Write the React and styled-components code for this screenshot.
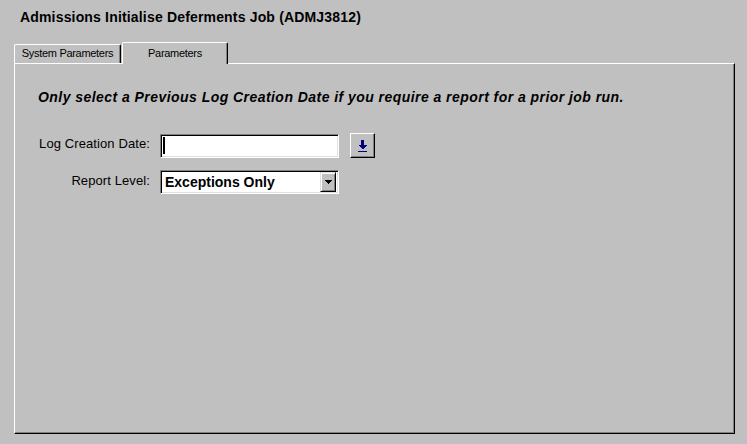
import React from "react";
import styled, { createGlobalStyle } from "styled-components";

const GlobalStyle = createGlobalStyle`
  html, body { margin: 0; padding: 0; background: #c0c0c0; }
  body { font-family: "Liberation Sans", Arial, sans-serif; color: #000; }
  * { box-sizing: border-box; }
`;

const Window = styled.div`
  width: 747px;
  height: 444px;
  display: flex;
  flex-direction: column;
  padding: 0 12px 10px 14px;
  background: #c0c0c0;
`;

const Title = styled.div`
  height: 42px;
  padding: 9px 0 0 6px;
  font-size: 14px;
  line-height: 16px;
  font-weight: bold;
  letter-spacing: 0.17px;
`;

const TabBar = styled.div`
  display: flex;
  align-items: flex-end;
  height: 21px;
  position: relative;
  z-index: 1;
`;

const Tab = styled.div`
  width: ${(p) => (p.$active ? "106px" : "107px")};
  height: ${(p) => (p.$active ? "22px" : "19px")};
  margin-bottom: ${(p) => (p.$active ? "-1px" : "0")};
  margin-left: ${(p) => (p.$active ? "1px" : "0")};
  background: #c0c0c0;
  border-top: 1px solid #fff;
  border-left: 1px solid #fff;
  border-right: 1px solid #000;
  box-shadow: inset -1px 0 #808080;
  border-radius: 2px 2px 0 0;
  font-size: 11px;
  letter-spacing: -0.3px;
  line-height: ${(p) => (p.$active ? "20px" : "17px")};
  text-align: center;
  white-space: nowrap;
`;

const Panel = styled.div`
  flex: 1;
  border-top: 1px solid #fff;
  border-left: 1px solid #fff;
  border-right: 1px solid #000;
  border-bottom: 1px solid #000;
  box-shadow: inset -1px -1px #808080;
  padding: 25px 0 0 23px;
`;

const Note = styled.div`
  font-size: 14px;
  line-height: 16px;
  font-style: italic;
  font-weight: bold;
  letter-spacing: 0.45px;
  white-space: nowrap;
  margin-bottom: 28px;
`;

const Form = styled.div`
  display: grid;
  grid-template-columns: 112px 179px auto;
  column-gap: 10px;
  row-gap: 12px;
  align-items: center;
`;

const Label = styled.div`
  font-size: 13px;
  line-height: 14px;
  letter-spacing: 0.1px;
  text-align: right;
  white-space: nowrap;
  position: relative;
  top: ${(p) => p.$shift || "0"};
`;

const Sunken = styled.div`
  height: 24px;
  background: #fff;
  border-top: 1px solid #808080;
  border-left: 1px solid #808080;
  border-right: 1px solid #fff;
  border-bottom: 1px solid #fff;
  box-shadow: inset 1px 1px #000, inset -1px -1px #dfdfdf;
  display: flex;
  align-items: center;
`;

const Caret = styled.span`
  width: 2px;
  height: 17px;
  margin-left: 2px;
  background: #000;
`;

const SelectText = styled.span`
  flex: 1;
  padding-left: 4px;
  font-size: 14px;
  font-weight: bold;
  white-space: nowrap;
`;

const DropBtn = styled.div`
  width: 16px;
  height: 20px;
  margin-right: 2px;
  background: #c0c0c0;
  border-top: 1px solid #dfdfdf;
  border-left: 1px solid #dfdfdf;
  border-right: 1px solid #000;
  border-bottom: 1px solid #000;
  box-shadow: inset 1px 1px #fff, inset -1px -1px #808080;
  display: flex;
  align-items: center;
  justify-content: center;
`;

const RaisedBtn = styled.div`
  width: 25px;
  height: 25px;
  margin-left: 1px;
  background: #c0c0c0;
  border-top: 1px solid #fff;
  border-left: 1px solid #fff;
  border-right: 1px solid #000;
  border-bottom: 1px solid #000;
  box-shadow: inset -1px -1px #808080;
  display: flex;
  align-items: center;
  justify-content: center;
`;

const DownArrowIcon = () => (
  <svg width="9" height="12" viewBox="0 0 9 12" shapeRendering="crispEdges">
    <rect x="3" y="0" width="3" height="5" fill="#000080" />
    <polygon points="0,5 9,5 4.5,9.5" fill="#000080" />
    <rect x="0" y="11" width="9" height="1" fill="#000080" />
  </svg>
);

const SmallTriangle = () => (
  <svg width="7" height="4" viewBox="0 0 7 4" shapeRendering="crispEdges">
    <polygon points="0,0 7,0 3.5,4" fill="#000" />
  </svg>
);

export default function App() {
  return (
    <>
      <GlobalStyle />
      <Window>
        <Title>Admissions Initialise Deferments Job (ADMJ3812)</Title>
        <TabBar>
          <Tab>System Parameters</Tab>
          <Tab $active>Parameters</Tab>
        </TabBar>
        <Panel>
          <Note>
            Only select a Previous Log Creation Date if you require a report for a prior job run.
          </Note>
          <Form>
            <Label $shift="-2px">Log Creation Date:</Label>
            <Sunken>
              <Caret />
            </Sunken>
            <RaisedBtn>
              <DownArrowIcon />
            </RaisedBtn>
            <Label $shift="-1px">Report Level:</Label>
            <Sunken>
              <SelectText>Exceptions Only</SelectText>
              <DropBtn>
                <SmallTriangle />
              </DropBtn>
            </Sunken>
            <span />
          </Form>
        </Panel>
      </Window>
    </>
  );
}
